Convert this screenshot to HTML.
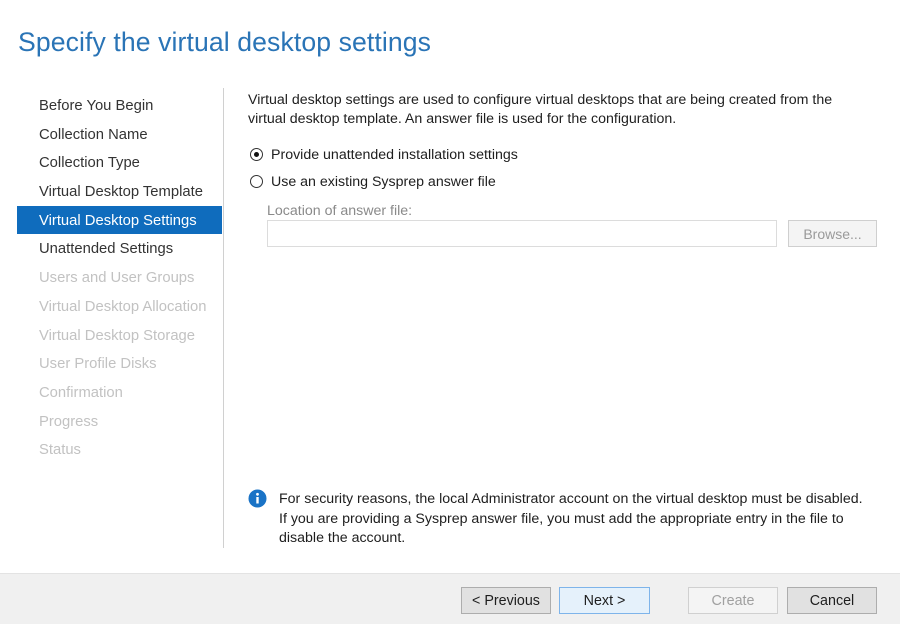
<!DOCTYPE html>
<html><head><style>
*{margin:0;padding:0;box-sizing:border-box}
body{width:900px;height:624px;background:#fff;font-family:"Liberation Sans",sans-serif;position:relative;overflow:hidden;color:#1e1e1e}
.a{position:absolute;white-space:nowrap}
h1{position:absolute;left:18px;top:27px;font-weight:normal;font-size:26.6px;color:#2a74b6;letter-spacing:0.1px}
.nav{position:absolute;left:17px;top:91px;width:205px}
.nav div{height:28.7px;line-height:30px;padding-left:22px;font-size:14.8px;color:#333}
.nav .sel{background:#0f6cbd;color:#fff}
.nav .dis{color:#c2c2c2}
.sep{position:absolute;left:223px;top:88px;width:1px;height:460px;background:#d0d0d0}
.t{font-size:14.2px;color:#1e1e1e}
.radio{position:absolute;width:13px;height:13px;border:1px solid #333;border-radius:50%;background:#fff}
.radio.on::after{content:"";position:absolute;left:3px;top:3px;width:5px;height:5px;border-radius:50%;background:#111}
.box{position:absolute;border:1px solid #dcdcdc;background:#fff}
.btn{position:absolute;top:587px;height:27px;border:1px solid #adadad;background:#e1e1e1;font-size:14.3px;text-align:center;line-height:27px;color:#1e1e1e}
.footer{position:absolute;left:0;top:573px;width:900px;height:51px;background:#f0f0f0;border-top:1px solid #e3e3e3}
</style></head><body>
<h1>Specify the virtual desktop settings</h1>
<div class="nav">
<div>Before You Begin</div>
<div>Collection Name</div>
<div>Collection Type</div>
<div>Virtual Desktop Template</div>
<div class="sel">Virtual Desktop Settings</div>
<div>Unattended Settings</div>
<div class="dis">Users and User Groups</div>
<div class="dis">Virtual Desktop Allocation</div>
<div class="dis">Virtual Desktop Storage</div>
<div class="dis">User Profile Disks</div>
<div class="dis">Confirmation</div>
<div class="dis">Progress</div>
<div class="dis">Status</div>
</div>
<div class="sep"></div>
<div class="a t" style="left:248px;top:91px;line-height:19px">Virtual desktop settings are used to configure virtual desktops that are being created from the<br>virtual desktop template. An answer file is used for the configuration.</div>
<div class="radio on" style="left:250px;top:148px"></div>
<div class="a t" style="left:271px;top:147px">Provide unattended installation settings</div>
<div class="radio" style="left:250px;top:175px"></div>
<div class="a t" style="left:271px;top:174px">Use an existing Sysprep answer file</div>
<div class="a t" style="left:267px;top:203px;color:#8a8a8a">Location of answer file:</div>
<div class="box" style="left:267px;top:220px;width:510px;height:27px"></div>
<div class="box" style="left:788px;top:220px;width:89px;height:27px;background:#f4f4f4;border-color:#cfcfcf;font-size:14px;color:#9a9a9a;text-align:center;line-height:27px">Browse...</div>
<svg class="a" style="left:248px;top:489px" width="19" height="19"><circle cx="9.5" cy="9.5" r="9" fill="#1a73c6"/><rect x="8.3" y="8" width="2.4" height="6.5" fill="#fff"/><circle cx="9.5" cy="5.3" r="1.4" fill="#fff"/></svg>
<div class="a t" style="left:279px;top:490px;line-height:19.5px">For security reasons, the local Administrator account on the virtual desktop must be disabled.<br>If you are providing a Sysprep answer file, you must add the appropriate entry in the file to<br>disable the account.</div>
<div class="footer"></div>
<div class="btn" style="left:461px;width:90px">&lt; Previous</div>
<div class="btn" style="left:559px;width:91px;border-color:#7eb4ea;background:#e5f1fb">Next &gt;</div>
<div class="btn" style="left:688px;width:90px;background:#f4f4f4;border-color:#d0d0d0;color:#a0a0a0">Create</div>
<div class="btn" style="left:787px;width:90px">Cancel</div>
</body></html>
